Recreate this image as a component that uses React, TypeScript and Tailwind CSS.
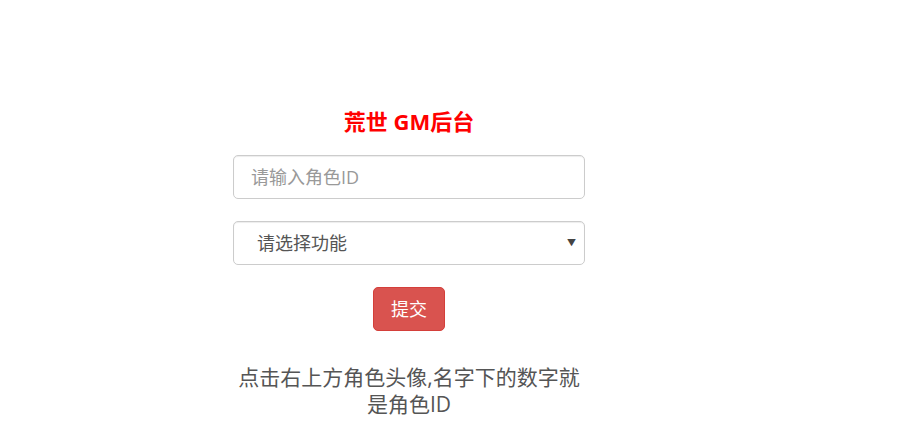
export default function App() {
  return (
    <div
      className="min-h-screen bg-white flex flex-col pl-[233px] pt-[106px]"
      style={{ fontFamily: '"Open Sans", "Noto Sans CJK SC", sans-serif' }}
    >
      <div className="w-[352px] flex flex-col items-center">
        <h1 className="text-[22px] font-bold text-[#ff0000] leading-[30px]">荒世 GM后台</h1>

        <input
          type="text"
          placeholder="请输入角色ID"
          className="mt-[19px] w-full h-[44px] rounded-[5px] border border-[#cccccc] px-[17px] text-[18px] text-[#555] placeholder:text-[#999] outline-none shadow-[inset_0_1px_1px_rgba(0,0,0,0.075)]"
        />

        <div className="relative mt-[22px] w-full">
          <select
            defaultValue=""
            className="w-full h-[44px] appearance-none rounded-[5px] border border-[#cccccc] bg-white pl-[23px] pr-8 text-[18px] text-[#555] outline-none shadow-[inset_0_1px_1px_rgba(0,0,0,0.075)]"
          >
            <option value="">请选择功能</option>
          </select>
          <span className="pointer-events-none absolute right-[9px] top-1/2 -translate-y-1/2 text-[9px] text-[#444]">▼</span>
        </div>

        <button className="mt-[22px] w-[72px] h-[44px] rounded-[5px] bg-[#d9534f] border border-[#d43f3a] text-white text-[18px]">
          提交
        </button>

        <p className="mt-[33px] text-center text-[21px] leading-[27px] text-[#555]">
          点击右上方角色头像,名字下的数字就是角色ID
        </p>
      </div>
    </div>
  );
}
